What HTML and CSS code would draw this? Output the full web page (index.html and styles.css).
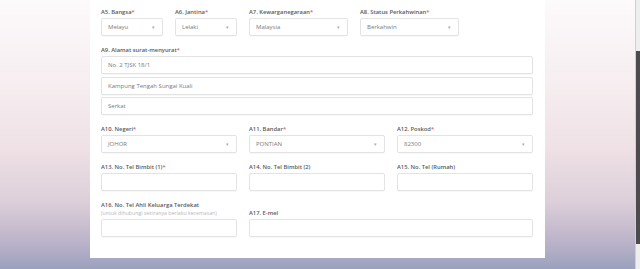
FILE: index.html
```html
<!DOCTYPE html>
<html lang="ms">
<head>
  <meta charset="UTF-8" />
  <meta name="viewport" content="width=device-width, initial-scale=1" />
  <title>Borang Maklumat Peribadi</title>
  <link rel="stylesheet" href="styles.css">
</head>
<body>

<div class="page">
  <div class="card">

    <div class="row">
      <div class="field span-2">
        <label>A5. Bangsa<span class="req">*</span></label>
        <div class="select">Melayu</div>
      </div>
      <div class="field span-2">
        <label>A6. Jantina<span class="req">*</span></label>
        <div class="select">Lelaki</div>
      </div>
      <div class="field span-3">
        <label>A7. Kewarganegaraan<span class="req">*</span></label>
        <div class="select">Malaysia</div>
      </div>
      <div class="field span-3">
        <label>A8. Status Perkahwinan<span class="req">*</span></label>
        <div class="select">Berkahwin</div>
      </div>
    </div>

    <div class="row">
      <div class="field span-12">
        <label>A9. Alamat surat-menyurat<span class="req">*</span></label>
        <div class="stack">
          <input type="text" value="No. 2 TJSK 18/1">
          <input type="text" value="Kampung Tengah Sungai Kuali">
          <input type="text" value="Serkat">
        </div>
      </div>
    </div>

    <div class="row">
      <div class="field span-4">
        <label>A10. Negeri<span class="req">*</span></label>
        <div class="select">JOHOR</div>
      </div>
      <div class="field span-4">
        <label>A11. Bandar<span class="req">*</span></label>
        <div class="select">PONTIAN</div>
      </div>
      <div class="field span-4">
        <label>A12. Poskod<span class="req">*</span></label>
        <div class="select">82300</div>
      </div>
    </div>

    <div class="row">
      <div class="field span-4">
        <label>A13. No. Tel Bimbit (1)<span class="req">*</span></label>
        <input type="text">
      </div>
      <div class="field span-4">
        <label>A14. No. Tel Bimbit (2)</label>
        <input type="text">
      </div>
      <div class="field span-4">
        <label>A15. No. Tel (Rumah)</label>
        <input type="text">
      </div>
    </div>

    <div class="row">
      <div class="field span-4">
        <label>A16. No. Tel Ahli Keluarga Terdekat</label>
        <small>(untuk dihubungi sekiranya berlaku kecemasan)</small>
        <input type="text">
      </div>
      <div class="field span-8">
        <label>A17. E-mel</label>
        <input type="text">
      </div>
    </div>

  </div>
</div>

<div class="scrollbar">
  <div class="thumb"></div>
</div>

</body>
</html>
```

FILE: styles.css
```css
body {
  margin: 0;
  height: 269px;
  overflow: hidden;
  display: flex;
  font-family: "Open Sans", sans-serif;
  background: linear-gradient(to bottom, #fdfafb 0%, #f6eef0 30%, #efe1e5 55%, #dccfd9 75%, #bbb3c9 90%, #9ba1be 100%);
}
.page {
  flex: 1;
  display: flex;
  justify-content: center;
  align-items: flex-start;
}
.card {
  width: 455px;
  box-sizing: border-box;
  background: #fff;
  padding: 8px 12px 21px 11px;
}
.row {
  display: grid;
  grid-template-columns: repeat(12, 1fr);
  column-gap: 12px;
  margin-bottom: 10px;
}
.row:last-child {
  margin-bottom: 0;
}
.span-2 { grid-column: span 2; }
.span-3 { grid-column: span 3; }
.span-4 { grid-column: span 4; }
.span-8 { grid-column: span 8; }
.span-12 { grid-column: span 12; }
.field {
  display: flex;
  flex-direction: column;
  justify-content: flex-end;
}
.field label {
  font-size: 5.8px;
  line-height: 8px;
  font-weight: 600;
  color: #5a5a5a;
  margin-bottom: 2px;
}
.req {
  color: #e0574f;
}
.field small {
  font-size: 5.2px;
  line-height: 8px;
  color: #b8b8b8;
  white-space: nowrap;
  margin-top: -2px;
  margin-bottom: 2px;
}
.select,
.field input {
  box-sizing: border-box;
  height: 18px;
  width: 100%;
  margin: 0;
  padding: 0 6px;
  border: 1px solid #e3e3e3;
  border-radius: 2px;
  background: #fff;
  font-family: "Open Sans", sans-serif;
  font-size: 6px;
  color: #7a7a7a;
  outline: none;
  box-shadow: 0 1px 1px rgba(0,0,0,0.03);
}
.select {
  display: flex;
  align-items: center;
  justify-content: space-between;
}
.select::after {
  content: "\25BE";
  font-size: 5px;
  color: #aaa;
  margin-right: 1px;
}
.stack {
  display: flex;
  flex-direction: column;
  gap: 2.5px;
}
.scrollbar {
  width: 5px;
  background: #eeeeee;
  border-left: 1px solid #d0d0d0;
  box-sizing: border-box;
  padding-top: 51px;
}
.thumb {
  height: 193px;
  background: #4d4b4d;
}
```
